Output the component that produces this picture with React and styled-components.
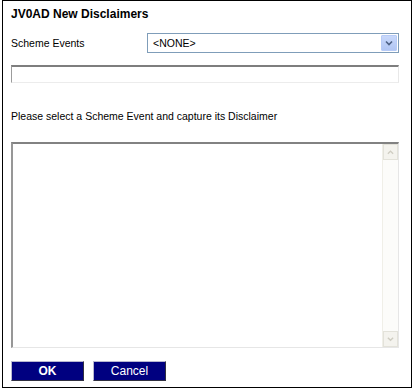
import React from "react";
import styled, { createGlobalStyle } from "styled-components";

const GlobalStyle = createGlobalStyle`
  html, body {
    margin: 0;
    padding: 0;
    background: #ffffff;
  }
  body {
    font-family: "Liberation Sans", Arial, sans-serif;
    font-size: 10.5px;
    color: #000;
  }
`;

const Panel = styled.div`
  box-sizing: border-box;
  width: 410px;
  height: 388px;
  margin-left: 2px;
  border: 1px solid #000;
  padding: 6px 12px 6px 8px;
  display: flex;
  flex-direction: column;
`;

const Title = styled.div`
  font-weight: bold;
  font-size: 12px;
  line-height: 14px;
`;

const FieldRow = styled.div`
  display: grid;
  grid-template-columns: 136px 1fr;
  align-items: center;
  margin-top: 12px;
`;

const Label = styled.div`
  font-size: 10.5px;
  line-height: 13px;
  margin-top: ${(p) => p.$top || 0}px;
`;

const Select = styled.div`
  box-sizing: border-box;
  height: 20px;
  border: 1px solid #7f9db9;
  background: #fff;
  display: flex;
  align-items: center;
  justify-content: space-between;
  padding: 0 1px 0 5px;
  font-size: 10.5px;
`;

const DropButton = styled.div`
  box-sizing: border-box;
  width: 16px;
  height: 16px;
  background: linear-gradient(#c8d8fb, #b1c6f4);
  border: 1px solid #b7cbf7;
  border-radius: 1px;
  display: flex;
  align-items: center;
  justify-content: center;
`;

const TextBox = styled.div`
  box-sizing: border-box;
  height: 18px;
  margin-top: 12px;
  border-top: 2px solid #7e7e7e;
  border-left: 1px solid #9c9c9c;
  border-right: 1px solid #e8e8e8;
  border-bottom: 1px solid #ececec;
  background: #fff;
`;

const TextArea = styled.div`
  box-sizing: border-box;
  height: 206px;
  margin-top: 19px;
  border-top: 2px solid #828282;
  border-left: 2px solid #979797;
  border-right: 1px solid #e6e6e6;
  border-bottom: 1px solid #e6e6e6;
  background: #fff;
  display: flex;
  justify-content: flex-end;
`;

const ScrollBar = styled.div`
  width: 15px;
  display: flex;
  flex-direction: column;
  background: #fcfcfa;
  border-left: 1px solid #f0efe8;
`;

const ScrollTrack = styled.div`
  flex: 1;
`;

const ScrollArrow = styled.div`
  box-sizing: border-box;
  height: 16px;
  background: #f4f3ee;
  border: 1px solid #e3e2da;
  display: flex;
  align-items: center;
  justify-content: center;
`;

const ButtonRow = styled.div`
  display: flex;
  gap: 9px;
  margin-top: 13px;
`;

const Button = styled.button`
  box-sizing: border-box;
  width: 73px;
  height: 20px;
  padding: 0;
  background: #000080;
  color: #fff;
  font-family: "Liberation Sans", Arial, sans-serif;
  font-size: 12px;
  font-weight: ${(p) => (p.$primary ? "bold" : "normal")};
  border: 1px solid;
  border-color: #b8b8d0 #303040 #303040 #b8b8d0;
`;

const Chevron = ({ up, color, w = 8 }) => (
  <svg width={w} height="6" viewBox="0 0 8 6">
    <path
      d={up ? "M1 5 L4 2 L7 5" : "M1 1.5 L4 4.5 L7 1.5"}
      fill="none"
      stroke={color}
      strokeWidth="1.6"
    />
  </svg>
);

export default function App() {
  return (
    <>
      <GlobalStyle />
      <Panel>
        <Title>JV0AD New Disclaimers</Title>
        <FieldRow>
          <Label>Scheme Events</Label>
          <Select>
            <span>&lt;NONE&gt;</span>
            <DropButton>
              <Chevron color="#4d6185" />
            </DropButton>
          </Select>
        </FieldRow>
        <TextBox />
        <Label $top={27}>Please select a Scheme Event and capture its Disclaimer</Label>
        <TextArea>
          <ScrollBar>
            <ScrollArrow>
              <Chevron up color="#cfcdc2" w={7} />
            </ScrollArrow>
            <ScrollTrack />
            <ScrollArrow>
              <Chevron color="#cfcdc2" w={7} />
            </ScrollArrow>
          </ScrollBar>
        </TextArea>
        <ButtonRow>
          <Button $primary>OK</Button>
          <Button>Cancel</Button>
        </ButtonRow>
      </Panel>
    </>
  );
}
